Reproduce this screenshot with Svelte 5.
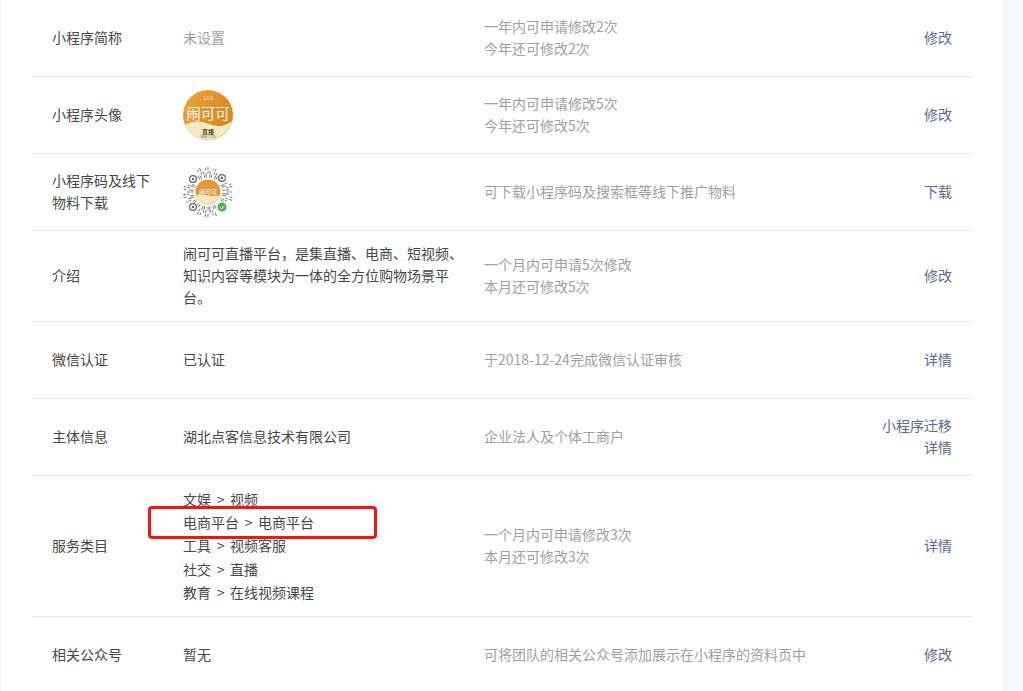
<script>
	const rows = [
		{ label: '小程序简称', value: ['未设置'], muted: true, desc: ['一年内可申请修改2次', '今年还可修改2次'], actions: ['修改'] },
		{ label: '小程序头像', image: 'avatar', desc: ['一年内可申请修改5次', '今年还可修改5次'], actions: ['修改'] },
		{ label: '小程序码及线下物料下载', image: 'qr', desc: ['可下载小程序码及搜索框等线下推广物料'], actions: ['下载'] },
		{ label: '介绍', value: ['闹可可直播平台，是集直播、电商、短视频、知识内容等模块为一体的全方位购物场景平台。'], desc: ['一个月内可申请5次修改', '本月还可修改5次'], actions: ['修改'] },
		{ label: '微信认证', value: ['已认证'], desc: ['于2018-12-24完成微信认证审核'], actions: ['详情'] },
		{ label: '主体信息', value: ['湖北点客信息技术有限公司'], desc: ['企业法人及个体工商户'], actions: ['小程序迁移', '详情'] },
		{ label: '服务类目', categories: ['文娱 > 视频', '电商平台 > 电商平台', '工具 > 视频客服', '社交 > 直播', '教育 > 在线视频课程'], desc: ['一个月内可申请修改3次', '本月还可修改3次'], actions: ['详情'] },
		{ label: '相关公众号', value: ['暂无'], desc: ['可将团队的相关公众号添加展示在小程序的资料页中'], actions: ['修改'] }
	];

	const eyes = [[10, 12], [39, 11], [10, 40]];

	// 小程序码的放射状线条，避开三个角上的定位点和右下角徽标
	const rays = [];
	const rings = [[14.5, 3], [18.5, 2.5], [22, 2]];
	for (let i = 0; i < 56; i++) {
		const a = (i / 56) * Math.PI * 2;
		rings.forEach(([r, len], k) => {
			const l = len + ((i * (k + 3)) % 4) * 0.5;
			const x = 25 + Math.cos(a) * r;
			const y = 25 + Math.sin(a) * r;
			if ((i + k) % 3 === 0) return;
			if ([...eyes, [39, 40]].some((e) => Math.hypot(e[0] - x, e[1] - y) < 6.5)) return;
			rays.push({ x1: x, y1: y, x2: 25 + Math.cos(a) * (r + l), y2: 25 + Math.sin(a) * (r + l) });
		});
	}
</script>

<div class="page">
	<div class="panel">
		{#each rows as row}
			<div class="row">
				<div class="label">{row.label}</div>
				<div class="value" class:muted={row.muted}>
					{#if row.image === 'avatar'}
						<svg class="pic" viewBox="0 0 50 50" width="50" height="50">
							<defs>
								<linearGradient id="av" x1="0" y1="0" x2="1" y2="0.6">
									<stop offset="0" stop-color="#e9a53c" />
									<stop offset="1" stop-color="#dc8420" />
								</linearGradient>
							</defs>
							<circle cx="25" cy="25" r="25" fill="url(#av)" />
							<path d="M2 35 C10 30 18 31 26 34 C34 37 42 37 49 31 A25 25 0 0 1 2 35Z" fill="#f3eac4" />
							<text x="26" y="10" class="live">LIVE</text>
							<text x="25" y="29" class="brand">闹可可</text>
							<text x="25" y="44" class="sub">直播</text>
							<text x="25" y="48" class="tiny">SAME CODE</text>
						</svg>
					{:else if row.image === 'qr'}
						<svg class="pic" viewBox="0 0 50 50" width="50" height="50">
							{#each rays as r}
								<line x1={r.x1} y1={r.y1} x2={r.x2} y2={r.y2} stroke="#555" stroke-width="0.8" />
							{/each}
							{#each eyes as e}
								<circle cx={e[0]} cy={e[1]} r="3.4" fill="#fff" stroke="#666" stroke-width="1.2" />
								<circle cx={e[0]} cy={e[1]} r="1.3" fill="#666" />
							{/each}
							<circle cx="25" cy="25" r="12.5" fill="#e3973a" />
							<path d="M13 28 C20 26 28 31 37 28 A12.5 12.5 0 0 1 13 28Z" fill="#f3eac4" />
							<text x="25" y="27" class="qr-brand">闹可可</text>
							<circle cx="39" cy="40" r="5" fill="#4cb04f" stroke="#fff" />
							<path d="M36.8 40.2 L38.6 41.9 L41.4 38.6" fill="none" stroke="#fff" stroke-width="1" />
						</svg>
					{:else if row.categories}
						<div class="cats">
							{#each row.categories as cat}
								<div>{cat}</div>
							{/each}
							<div class="mark"></div>
						</div>
					{:else}
						{row.value[0]}
					{/if}
				</div>
				<div class="desc">
					{#each row.desc as line}
						<div>{line}</div>
					{/each}
				</div>
				<div class="actions">
					{#each row.actions as action}
						<a href="#top">{action}</a>
					{/each}
				</div>
			</div>
		{/each}
	</div>
</div>

<style>
	:global(html), :global(body) {
		overflow: hidden;
		height: 100%;
	}

	.page {
		height: 691px;
		overflow: hidden;
		background: #f6f8f9;
		font-family: "Noto Sans CJK SC", "Liberation Sans", sans-serif;
		font-size: 14px;
		line-height: 22px;
		color: #484848;
	}

	.panel {
		width: 1001px;
		margin-left: 2px;
		padding: 0 31px 0 30px;
		box-sizing: border-box;
		background: #fff;
		min-height: 100%;
	}

	.row {
		display: grid;
		grid-template-columns: 131px 301px 1fr auto;
		align-items: center;
		min-height: 77px;
		padding: 11px 20px 13px 20px;
		box-sizing: border-box;
		border-bottom: 1px solid #e7e7eb;
	}

	.label {
		padding-right: 20px;
	}

	.value {
		padding-right: 15px;
	}

	.muted,
	.desc {
		color: #a0a0a0;
	}

	.pic {
		display: block;
		margin: 2px 0 0;
	}

	.live {
		font-size: 4.5px;
		fill: #f7dfb2;
		text-anchor: middle;
		font-family: "Liberation Sans", sans-serif;
	}

	.brand {
		font-size: 14.5px;
		fill: #fff;
		text-anchor: middle;
	}

	.sub {
		font-size: 6px;
		font-weight: 700;
		fill: #5d4f33;
		text-anchor: middle;
	}

	.tiny {
		font-size: 2.6px;
		fill: #7a6c4e;
		text-anchor: middle;
		font-family: "Liberation Sans", sans-serif;
	}

	.qr-brand {
		font-size: 6px;
		fill: #fff;
		text-anchor: middle;
	}

	.cats {
		position: relative;
		top: 1px;
		line-height: 23.2px;
		word-spacing: 2.5px;
	}

	/* 红色标注框 */
	.mark {
		position: absolute;
		left: -35px;
		top: 18px;
		width: 229px;
		height: 33px;
		box-sizing: border-box;
		border: 3px solid #f5150f;
		border-radius: 4px;
	}

	.actions {
		display: flex;
		flex-direction: column;
		align-items: flex-end;
	}

	a {
		color: #576b95;
		text-decoration: none;
	}
</style>
